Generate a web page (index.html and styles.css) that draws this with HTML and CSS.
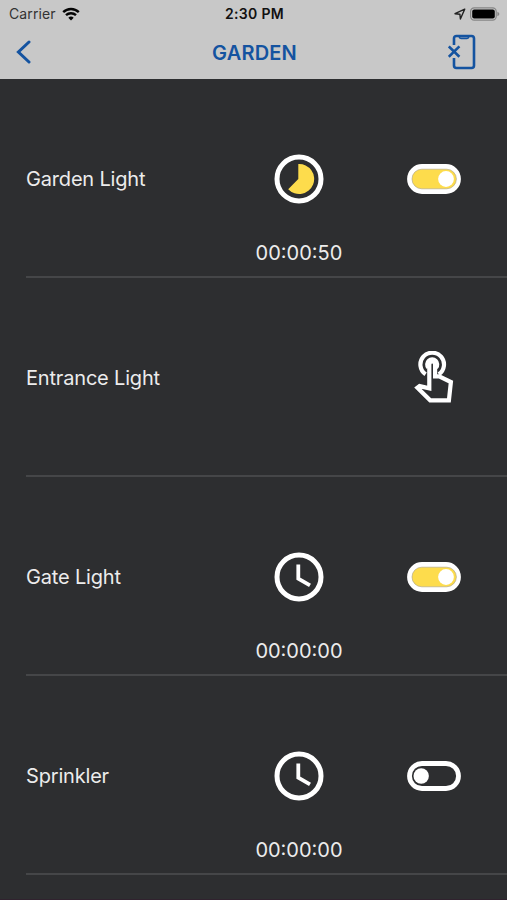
FILE: index.html
```html
<!DOCTYPE html>
<html lang="en">
<head>
  <meta charset="UTF-8">
  <meta name="viewport" content="width=device-width, initial-scale=1.0">
  <title>Garden</title>
  <link rel="stylesheet" href="styles.css">
</head>

<body>

  <header class="header">
    <div class="status-bar">
      <div class="status-left">
        <span class="carrier">Carrier</span>
        <svg class="wifi" viewBox="0 0 18 14" width="18" height="14">
          <path d="M1.2 5.2 A11.2 11.2 0 0 1 16.8 5.2" />
          <path d="M4 8.2 A7.2 7.2 0 0 1 14 8.2" />
          <path class="dot" d="M9 13.6 L6.3 10.8 A4 4 0 0 1 11.7 10.8 Z" />
        </svg>
      </div>
      <span class="clock">2:30 PM</span>
      <div class="status-right">
        <svg class="location" viewBox="0 0 12 12" width="12" height="12">
          <path d="M10.7 1.2 L1 5.7 L5.9 6.2 L6.4 11 Z" />
        </svg>
        <svg class="battery" viewBox="0 0 30 14" width="30" height="14">
          <rect class="shell" x="0.6" y="0.8" width="25.6" height="12.4" rx="3.6" />
          <rect x="2.2" y="2.4" width="22.6" height="9.2" rx="2" />
          <path class="cap" d="M27.4 4.8 Q29.4 5.6 29.4 7 T27.4 9.2 Z" />
        </svg>
      </div>
    </div>

    <nav class="navbar">
      <a class="back" href="#" aria-label="Back">
        <svg viewBox="0 0 16 24" width="16" height="24">
          <path d="M14 2 L3.4 12 L14 22" />
        </svg>
      </a>
      <h1>GARDEN</h1>
      <a class="device" href="#" aria-label="Disconnect">
        <svg viewBox="0 0 28 36" width="28" height="36">
          <path d="M6 11 V4.5 Q6 2 8.5 2 H23.5 Q26 2 26 4.5 V31.5 Q26 34 23.5 34 H8.5 Q6 34 6 31.5 V24" />
          <path class="notch" d="M11 2.4 Q11.4 4.4 13 4.4 H19 Q20.6 4.4 21 2.4" />
          <path class="cross" d="M0.8 12.4 L11.4 22.8 M11.4 12.4 L0.8 22.8" />
        </svg>
      </a>
    </nav>
  </header>

  <main class="list">
    <section class="row">
      <h2>Garden Light</h2>
      <div class="timer">
        <svg class="timer-icon" viewBox="0 0 50 50" width="50" height="50">
          <circle class="ring" cx="25" cy="25" r="22" />
          <path class="slice" d="M24.3 25 V10 A15 15 0 1 1 14.2 35.2 Z" />
        </svg>
        <span class="time">00:00:50</span>
      </div>
      <svg class="switch on" viewBox="0 0 54 30" width="54" height="30">
        <rect class="track" x="2.5" y="2.5" width="49" height="25" rx="12.5" />
        <rect class="fill" x="5" y="5.2" width="44.4" height="19.6" rx="9.8" />
        <circle class="knob" cx="39" cy="15" r="7.9" />
      </svg>
    </section>

    <section class="row">
      <h2>Entrance Light</h2>
      <svg class="touch" viewBox="1 0 42 54" width="42" height="54">
        <path d="M13.6 23.3 A11.8 11.8 0 1 1 26.8 23.3" />
        <path class="finger" d="M15.9 17 A5.6 5.6 0 1 1 24.5 17" />
        <path d="M17.3 37.4 V13.4 A2.9 2.9 0 0 1 23.1 13.4 V25.4 H27.2 L38.9 31 L36.9 49.3 H18.2 L5.4 36.8 L7.6 35.1 Z" />
      </svg>
    </section>

    <section class="row">
      <h2>Gate Light</h2>
      <div class="timer">
        <svg class="timer-icon" viewBox="0 0 50 50" width="50" height="50">
          <circle class="ring" cx="25" cy="25" r="22" />
          <path class="hands" d="M24.3 12.6 V26.6 L36 33.4" />
        </svg>
        <span class="time">00:00:00</span>
      </div>
      <svg class="switch on" viewBox="0 0 54 30" width="54" height="30">
        <rect class="track" x="2.5" y="2.5" width="49" height="25" rx="12.5" />
        <rect class="fill" x="5" y="5.2" width="44.4" height="19.6" rx="9.8" />
        <circle class="knob" cx="39" cy="15" r="7.9" />
      </svg>
    </section>

    <section class="row">
      <h2>Sprinkler</h2>
      <div class="timer">
        <svg class="timer-icon" viewBox="0 0 50 50" width="50" height="50">
          <circle class="ring" cx="25" cy="25" r="22" />
          <path class="hands" d="M24.3 12.6 V26.6 L36 33.4" />
        </svg>
        <span class="time">00:00:00</span>
      </div>
      <svg class="switch" viewBox="0 0 54 30" width="54" height="30">
        <rect class="track" x="2.5" y="2.5" width="49" height="25" rx="12.5" />
        <circle class="knob" cx="14.2" cy="15" r="7.7" />
      </svg>
    </section>
  </main>

</body>
</html>
```
FILE: styles.css
```css
/* General Reset */
* {
  margin: 0;
  padding: 0;
  box-sizing: border-box;
}

body {
  font-family: Inter, 'Liberation Sans', sans-serif;
  background: #2d2e30;
  color: #ececec;
  height: 900px;
  overflow: hidden;
  border-bottom: 1px solid #30222e;
}

svg {
  display: block;
  fill: none;
}

/* Header */
.header {
  height: 79px;
  background: #c8c8c8;
}

.status-bar {
  display: grid;
  grid-template-columns: 1fr auto 1fr;
  align-items: center;
  height: 27px;
  padding: 0 7px 0 9px;
  font-size: 14px;
  color: #111;
}

.status-left,
.status-right {
  display: flex;
  align-items: center;
}

.status-left {
  gap: 6px;
  color: #333;
}

.carrier {
  letter-spacing: 0.1px;
}

.status-right {
  justify-content: flex-end;
  gap: 4px;
}

.clock {
  font-weight: 600;
  font-size: 14px;
  letter-spacing: 0.35px;
}

.wifi path {
  stroke: #050505;
  stroke-width: 2.4;
}

.wifi .dot {
  fill: #050505;
  stroke: none;
}

.location path {
  stroke: #222;
  stroke-width: 1.4;
  stroke-linejoin: round;
}

.battery {
  fill: #000;
}

.battery .shell {
  fill: none;
  stroke: #858585;
  stroke-width: 1.2;
}

.battery .cap {
  fill: #858585;
}

/* Navigation Bar */
.navbar {
  display: grid;
  grid-template-columns: 1fr auto 1fr;
  align-items: center;
  height: 50px;
  padding: 0 31px 0 15px;
}

.navbar h1 {
  font-size: 20px;
  font-weight: 600;
  letter-spacing: 0.2px;
  margin: 1px -9px 0 9px;
  color: #1453a0;
}

.navbar path {
  stroke: #1453a0;
  stroke-width: 2.6;
}

.navbar .notch {
  stroke-width: 1.6;
}

.navbar .back path {
  stroke-width: 3;
  stroke-linecap: round;
}

.device {
  justify-self: end;
}

/* Device list */
.row {
  display: grid;
  grid-template-columns: 206px 134px 135px;
  align-items: center;
  height: 199px;
  margin-left: 26px;
  padding-top: 2px;
  border-bottom: 2px solid #454648;
}

.row h2 {
  font-size: 20px;
  font-weight: 400;
  letter-spacing: -0.18px;
  white-space: nowrap;
}

.timer {
  display: flex;
  flex-direction: column;
  align-items: center;
  gap: 37px;
  padding-top: 61px;
}

.time {
  font-size: 20px;
  line-height: 24px;
}

.ring {
  stroke: #fff;
  stroke-width: 5;
}

.slice {
  fill: #fddc4c;
}

.hands {
  stroke: #fff;
  stroke-width: 3.8;
}

.switch,
.touch {
  grid-column: 3;
  justify-self: center;
}

.track {
  stroke: #fff;
  stroke-width: 4.8;
}

.on .track {
  fill: #fff;
}

.fill {
  fill: #fddc4c;
  stroke: #a9a081;
  stroke-width: 0.6;
}

.knob {
  fill: #fff;
}

.touch path {
  stroke: #fff;
  stroke-width: 4.2;
}

.touch .finger {
  stroke-width: 3;
}
```
